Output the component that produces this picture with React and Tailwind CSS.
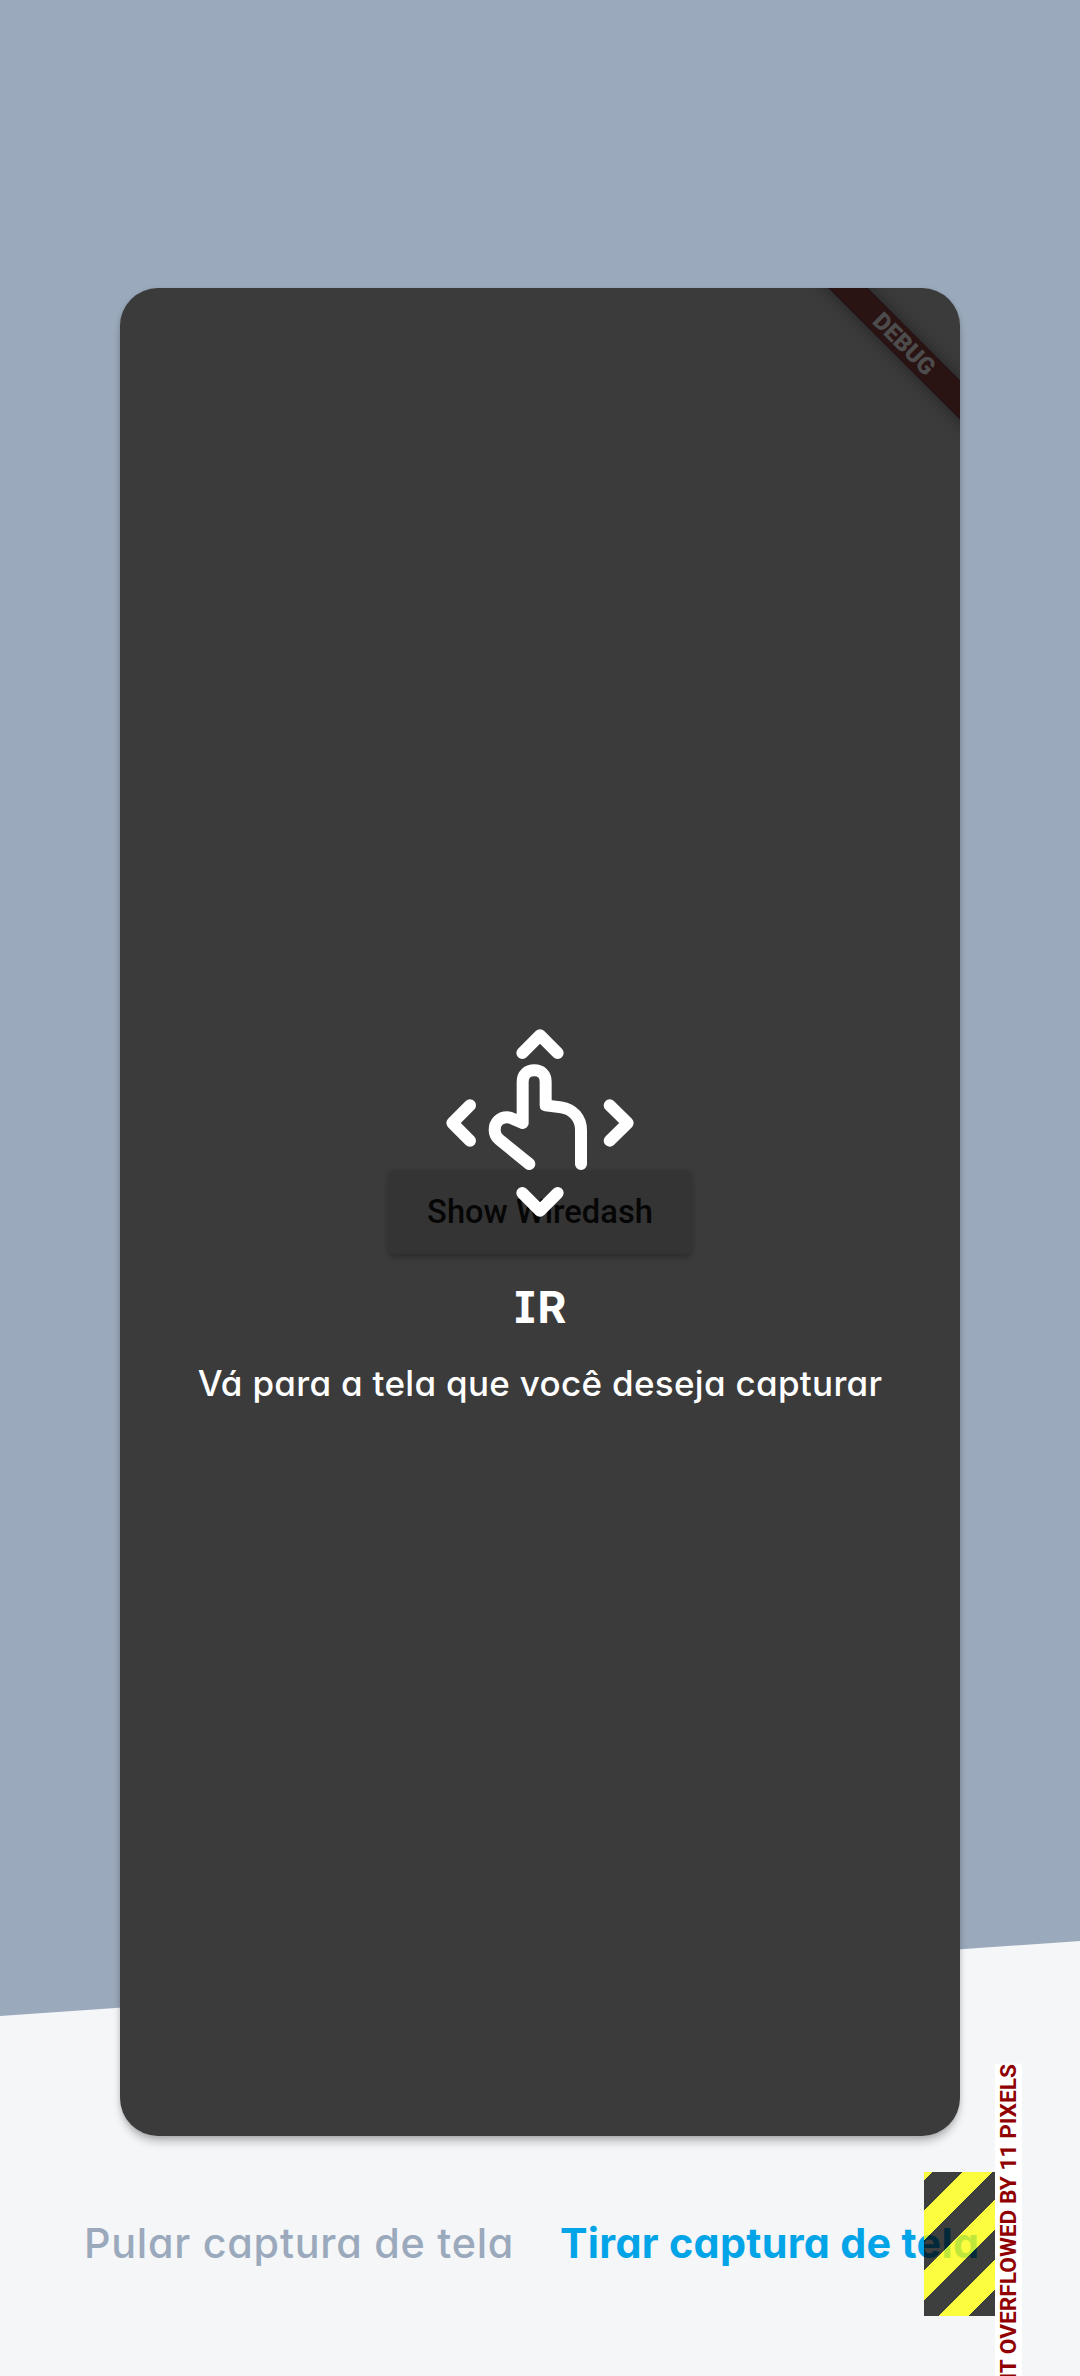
const lexend = "font-['Inter','Liberation_Sans',sans-serif] [font-feature-settings:'cv11','cv08']";

function GestureIcon() {
  return (
    <svg
      className="block h-[190px] w-[190px]"
      viewBox="196 54 570 570"
      fill="none"
      stroke="white"
      strokeWidth="36"
      strokeLinecap="round"
      strokeLinejoin="round"
    >
      <path d="M428 129L481 76L534 129" />
      <path d="M271 286L218 339L271 392" />
      <path d="M690 286L744 339L690 392" />
      <path d="M428 549L481 602L534 549" />
      <path d="M449 462L358 388C349 380 345 371 345 360C345 337 361 322 382 322C390 322 395 324 401 327L429 339V215C429 193 443 181 464 181C484 181 498 193 498 215V286L545 292C580 297 604 325 604 360V462" />
    </svg>
  );
}

function DebugBanner() {
  return (
    <div className="absolute top-[42px] left-[664px] flex h-[28px] w-[240px] rotate-45 items-center justify-center bg-[#2a1313] shadow-[0_0_16px_rgba(0,0,0,0.4)]">
      <span className="font-[Roboto,sans-serif] text-[24px] leading-none font-black text-[#4c4c4c]">DEBUG</span>
    </div>
  );
}

function AppPreview() {
  return (
    <section className="relative mx-auto flex h-[1848px] w-[840px] items-center justify-center rounded-[38px] bg-[#3b3b3b] shadow-[0_7px_10px_-2px_rgba(0,0,0,0.28),0_1px_5px_rgba(0,0,0,0.1)]">
      <div className="absolute inset-0 overflow-hidden rounded-[38px]">
        <DebugBanner />
      </div>
      <button className="flex h-[84px] w-[302px] items-center justify-center rounded-[5px] bg-[#343434] pt-[2px] font-[Roboto,sans-serif] text-[32.7px] font-medium whitespace-nowrap text-[#060606] shadow-[0_3px_6px_rgba(0,0,0,0.3)]">
        Show Wiredash
      </button>
      <div className={`absolute inset-0 flex flex-col items-center pt-[740px] text-white ${lexend}`}>
        <GestureIcon />
        <h1 className="mt-[61px] pl-[3px] text-[44px] leading-[56px] font-bold tracking-[2px]">IR</h1>
        <p className="mt-[26px] text-[35px] leading-[44px] font-[450] tracking-[0.3px] whitespace-nowrap">
          Vá para a tela que você deseja capturar
        </p>
      </div>
    </section>
  );
}

function OverflowMarker() {
  return (
    <>
      <div className="absolute top-[2172px] left-[924px] h-[144px] w-[71px] bg-[repeating-linear-gradient(135deg,#ffff00bf_0px,#ffff00bf_5.8px,#000000bf_5.8px,#000000bf_27.01px,#ffff00bf_27.01px,#ffff00bf_42.43px)]" />
      <div className="absolute top-[2064px] left-[994.5px] flex w-[27px] rotate-180 items-center justify-center bg-white font-[Roboto,sans-serif] text-[22.7px] leading-[27px] font-bold whitespace-nowrap text-[#900000] [writing-mode:vertical-rl]">
        RIGHT OVERFLOWED BY 11 PIXELS
      </div>
    </>
  );
}

export default function App() {
  return (
    <main className="relative h-[2376px] w-[1080px] overflow-hidden bg-[#9ba9bc] pt-[288px]">
      <div className="absolute inset-x-0 top-[1941px] bottom-0 bg-[#f4f6f8] [clip-path:polygon(0_75px,100%_0,100%_100%,0_100%)]" />
      <AppPreview />
      <nav className={`relative mt-[72px] flex h-[72px] items-center pl-[84px] text-[41.3px] whitespace-nowrap ${lexend}`}>
        <button className="w-[476px] text-left font-[450] tracking-[0.75px] text-[#9ba9bc]">Pular captura de tela</button>
        <button className="text-left font-bold tracking-[0.3px] text-[#02a4e8]">Tirar captura de tela</button>
      </nav>
      <OverflowMarker />
    </main>
  );
}
